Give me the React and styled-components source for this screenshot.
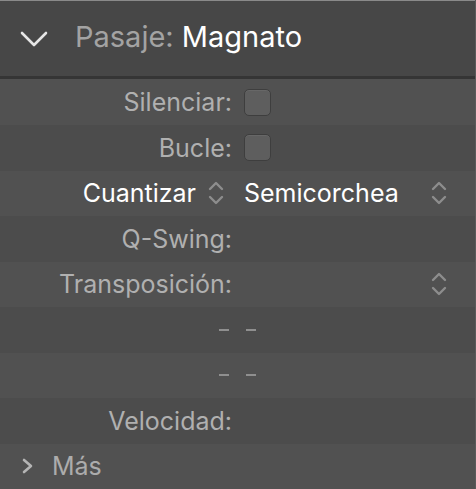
import React from 'react';
import styled, { createGlobalStyle } from 'styled-components';

const Global = createGlobalStyle`
  html, body {
    margin: 0;
    padding: 0;
    background: #4f4f4f;
  }
  body {
    font-family: Inter, "Liberation Sans", sans-serif;
    -webkit-font-smoothing: antialiased;
  }
`;

const Panel = styled.div`
  width: 476px;
  height: 489px;
  overflow: hidden;
  display: flex;
  flex-direction: column;
  background: #4f4f4f;
  border-right: 1px solid #5a5a5a;
  box-sizing: border-box;
`;

const Header = styled.div`
  height: 79px;
  box-sizing: border-box;
  border-top: 1px solid #8a8a8a;
  border-bottom: 3px solid #353535;
  background: #474747;
  display: flex;
  align-items: center;
  padding-left: 20px;
  gap: 27px;
`;

const Title = styled.div`
  font-size: 29px;
  color: #ffffff;
  padding-bottom: 4px;
`;

const TitleKey = styled.span`
  color: #a3a3a3;
`;

const Row = styled.div`
  height: ${p => p.$h || 45.5}px;
  flex: none;
  display: flex;
  align-items: center;
  background: ${p => (p.$alt ? '#4c4c4c' : '#515151')};
`;

const LabelCell = styled.div`
  width: 232px;
  flex: none;
  display: flex;
  justify-content: flex-end;
  align-items: center;
  gap: 11px;
  font-size: 25px;
  color: ${p => (p.$bright ? '#ffffff' : '#b0b0b0')};
  padding-right: ${p => (p.$bright ? '7px' : '0')};
  box-sizing: border-box;
`;

const ValueCell = styled.div`
  flex: 1;
  display: flex;
  align-items: center;
  justify-content: space-between;
  padding-left: 12px;
  padding-right: 27px;
  font-size: 25px;
  color: #ffffff;
`;

const Checkbox = styled.div`
  width: 25px;
  height: 25px;
  border-radius: 5px;
  background: #5e5e5e;
  border: 1px solid #3e3e3e;
  box-shadow: inset 0 1px 0 rgba(255, 255, 255, 0.06);
`;

const Dashes = styled.div`
  width: 100%;
  display: flex;
  justify-content: center;
  gap: 17px;
`;

const Dash = styled.span`
  display: block;
  width: 10px;
  height: 2px;
  background: #8f8f8f;
`;

const MoreRow = styled(Row)`
  padding-left: 22px;
  gap: 18px;
  font-size: 25px;
  color: #acacac;
`;

const Stepper = () => (
  <svg width="18" height="26" viewBox="0 0 18 26" fill="none" stroke="#8d8d8d" strokeWidth="2.4" strokeLinecap="round" strokeLinejoin="round">
    <path d="M3 9 L9 3 L15 9" />
    <path d="M3 17 L9 23 L15 17" />
  </svg>
);

const ChevronDown = () => (
  <svg width="28" height="18" viewBox="0 0 28 18" fill="none" stroke="#e6e6e6" strokeWidth="2.6" strokeLinecap="round" strokeLinejoin="round">
    <path d="M2 3 L14 15 L26 3" />
  </svg>
);

const ChevronRight = () => (
  <svg width="12" height="16" viewBox="0 0 12 16" fill="none" stroke="#b5b5b5" strokeWidth="2.6" strokeLinecap="round" strokeLinejoin="round">
    <path d="M2 2 L9 8 L2 14" />
  </svg>
);

export default function App() {
  return (
    <Panel>
      <Global />
      <Header>
        <ChevronDown />
        <Title>
          <TitleKey>Pasaje: </TitleKey>Magnato
        </Title>
      </Header>
      <Row $h={46}>
        <LabelCell>Silenciar:</LabelCell>
        <ValueCell><Checkbox /></ValueCell>
      </Row>
      <Row $alt>
        <LabelCell>Bucle:</LabelCell>
        <ValueCell><Checkbox /></ValueCell>
      </Row>
      <Row>
        <LabelCell $bright>
          Cuantizar <Stepper />
        </LabelCell>
        <ValueCell>
          Semicorchea <Stepper />
        </ValueCell>
      </Row>
      <Row $alt>
        <LabelCell>Q-Swing:</LabelCell>
        <ValueCell />
      </Row>
      <Row>
        <LabelCell>Transposición:</LabelCell>
        <ValueCell>
          <span />
          <Stepper />
        </ValueCell>
      </Row>
      <Row $alt>
        <Dashes><Dash /><Dash /></Dashes>
      </Row>
      <Row>
        <Dashes><Dash /><Dash /></Dashes>
      </Row>
      <Row $alt>
        <LabelCell>Velocidad:</LabelCell>
        <ValueCell />
      </Row>
      <MoreRow>
        <ChevronRight />
        Más
      </MoreRow>
    </Panel>
  );
}
